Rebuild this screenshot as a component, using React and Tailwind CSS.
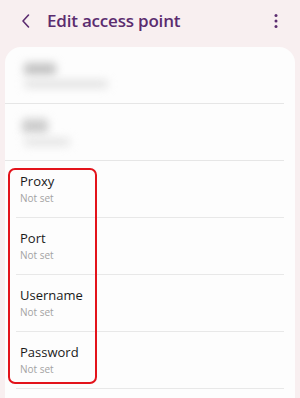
export default function App() {
  const rows = ["Proxy", "Port", "Username", "Password"];
  return (
    <div className="w-[300px] h-[398px] bg-[#f8eff0] overflow-hidden" style={{ fontFamily: '"Open Sans", "Noto Sans", sans-serif' }}>
      <div className="h-[47px] flex items-center pl-[21px] pr-[22px] pb-[6px]">
        <svg width="10" height="16" viewBox="0 0 10 16" className="mr-[16px]">
          <path d="M7.5 2 L2 8 L7.5 14" fill="none" stroke="#5b2c6f" strokeWidth="1.6" strokeLinecap="round" strokeLinejoin="round" />
        </svg>
        <div className="text-[17px] font-semibold text-[#5b2c6f] tracking-[-0.2px] flex-1">Edit access point</div>
        <svg width="4" height="16" viewBox="0 0 4 16">
          <circle cx="2" cy="2.5" r="1.5" fill="#5b2c6f" />
          <circle cx="2" cy="8" r="1.5" fill="#5b2c6f" />
          <circle cx="2" cy="13.5" r="1.5" fill="#5b2c6f" />
        </svg>
      </div>
      <div className="mx-[5px] bg-[#fdfdfd] rounded-t-[16px] h-[360px] relative">
        <div className="h-[57px] flex flex-col justify-center pl-[15px] border-b border-[#e6e6e6] mx-[11px] -ml-0">
          <div className="blur-[4px] w-[32px] h-[12px] bg-[#c2c2c2] rounded ml-[4px] mb-[5px]"></div>
          <div className="blur-[4px] w-[84px] h-[8px] bg-[#e2e2e2] rounded ml-[4px]"></div>
        </div>
        <div className="h-[57px] flex flex-col justify-center pl-[15px] border-b border-[#e6e6e6] mx-[11px] -ml-0">
          <div className="blur-[4px] w-[26px] h-[14px] bg-[#cccccc] rounded ml-[2px] mb-[5px]"></div>
          <div className="blur-[4px] w-[46px] h-[8px] bg-[#e4e4e4] rounded ml-[4px]"></div>
        </div>
        {rows.map((r) => (
          <div key={r} className="h-[57px] flex flex-col justify-center pl-[4px] ml-[11px] mr-[11px] border-b border-[#e8e8e8]">
            <div className="text-[13px] leading-[16px] text-[#1a1a1a] -mt-[1px]">{r}</div>
            <div className="text-[10px] leading-[14px] text-[#a3a3a3] mt-[2px]">Not set</div>
          </div>
        ))}
        <div className="absolute left-[3px] top-[121px] w-[89px] h-[216px] border-2 border-[#e3131b] rounded-[7px]"></div>
      </div>
    </div>
  );
}
